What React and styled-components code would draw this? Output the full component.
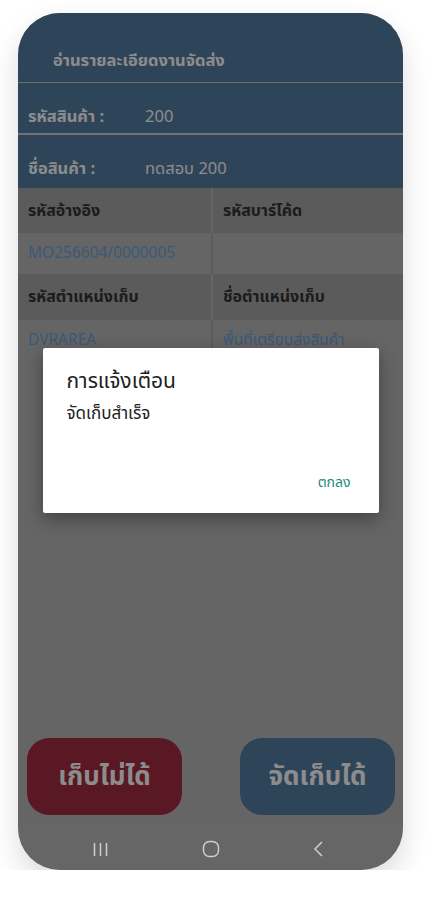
import React from "react";
import styled, { createGlobalStyle } from "styled-components";

const GlobalStyle = createGlobalStyle`
  html, body {
    margin: 0;
    padding: 0;
    background: #ffffff;
    font-family: "Noto Sans Thai", "Noto Sans", "DejaVu Sans", sans-serif;
  }
`;

const Phone = styled.div`
  position: relative;
  margin: 13px 0 0 18px;
  width: 385px;
  height: 857px;
  border-radius: 42px;
  overflow: hidden;
  box-shadow: 0 12px 28px rgba(0, 0, 0, 0.14);
  display: flex;
  flex-direction: column;
  background: #b9b9b9;
`;

const Screen = styled.div`
  position: relative;
  flex: 1;
  display: flex;
  flex-direction: column;
`;

const Header = styled.div`
  background: #547ca2;
  display: flex;
  flex-direction: column;
`;

const Title = styled.div`
  height: 70px;
  box-sizing: border-box;
  padding: 37px 0 0 35px;
  font-size: 16.5px;
  line-height: 22px;
  font-weight: 700;
  color: #ffffff;
  border-bottom: 1px solid #c8c8c8;
`;

const InfoRow = styled.div`
  display: flex;
  align-items: flex-start;
  box-sizing: border-box;
  height: ${(p) => p.h}px;
  padding: 23px 0 0 10px;
  font-size: 16.5px;
  line-height: 22px;
  color: #ffffff;
  border-bottom: ${(p) => (p.line ? "2px solid #cfcfcf" : "none")};
`;

const InfoLabel = styled.span`
  width: 117px;
  font-weight: 700;
`;

const Grid = styled.div`
  display: grid;
  grid-template-columns: 193px 1fr;
  column-gap: 2px;
`;

const HeadCell = styled.div`
  background: #a7a7a7;
  height: ${(p) => p.h}px;
  display: flex;
  align-items: center;
  padding-left: 10px;
  font-size: 16px;
  font-weight: 700;
  color: #333333;
`;

const DataCell = styled.div`
  background: #b9b9b9;
  height: ${(p) => p.h}px;
  display: flex;
  align-items: center;
  padding-left: 10px;
  font-size: 15.5px;
  color: #6aa2d8;
`;

const DataGrid = styled(Grid)`
  background: #a7a7a7;
`;

const Spacer = styled.div`
  flex: 1;
`;

const Actions = styled.div`
  display: flex;
  justify-content: space-between;
  padding: 0 8px 10px 9px;
`;

const ActionButton = styled.div`
  width: 155px;
  height: 77px;
  border-radius: 22px;
  background: ${(p) => p.bg};
  display: flex;
  align-items: center;
  justify-content: center;
  color: #ffffff;
  font-size: 26px;
  font-weight: 700;
`;

const Backdrop = styled.div`
  position: absolute;
  inset: 0;
  background: rgba(0, 0, 0, 0.45);
  display: flex;
  justify-content: center;
  align-items: flex-start;
  padding-top: 335px;
`;

const Dialog = styled.div`
  width: 336px;
  height: 165px;
  box-sizing: border-box;
  background: #ffffff;
  border-radius: 2px;
  box-shadow: 0 6px 18px rgba(0, 0, 0, 0.35);
  padding: 20px 28px 0 24px;
  display: flex;
  flex-direction: column;
`;

const DialogTitle = styled.div`
  font-size: 21px;
  line-height: 28px;
  color: #212121;
`;

const DialogText = styled.div`
  margin-top: 7px;
  font-size: 17px;
  line-height: 22px;
  color: #212121;
`;

const DialogActions = styled.div`
  margin-top: auto;
  margin-bottom: 20px;
  display: flex;
  justify-content: flex-end;
`;

const TextButton = styled.span`
  font-size: 14px;
  color: #1a8a80;
`;

const NavBar = styled.div`
  height: 45px;
  box-sizing: border-box;
  background: #666666;
  display: flex;
  align-items: center;
  justify-content: space-between;
  padding: 2px 78px 0 74px;
`;

function NavRecent() {
  return (
    <svg width="17" height="16" viewBox="0 0 17 16">
      <g stroke="#cfcfcf" strokeWidth="1.5">
        <line x1="2.5" y1="2" x2="2.5" y2="15" />
        <line x1="8.5" y1="2" x2="8.5" y2="15" />
        <line x1="14.5" y1="2" x2="14.5" y2="15" />
      </g>
    </svg>
  );
}

function NavHome() {
  return (
    <svg width="18" height="18" viewBox="0 0 18 18">
      <rect x="1.5" y="1.5" width="15" height="15" rx="6" fill="none" stroke="#cfcfcf" strokeWidth="1.5" />
    </svg>
  );
}

function NavBack() {
  return (
    <svg width="12" height="18" viewBox="0 0 12 18">
      <polyline points="9,2 2,9 9,16" fill="none" stroke="#cfcfcf" strokeWidth="1.5" />
    </svg>
  );
}

export default function App() {
  return (
    <>
      <GlobalStyle />
      <Phone>
        <Screen>
          <Header>
            <Title>อ่านรายละเอียดงานจัดส่ง</Title>
            <InfoRow h={52} line>
              <InfoLabel>รหัสสินค้า :</InfoLabel>
              <span>200</span>
            </InfoRow>
            <InfoRow h={53}>
              <InfoLabel>ชื่อสินค้า :</InfoLabel>
              <span>ทดสอบ 200</span>
            </InfoRow>
          </Header>

          <Grid>
            <HeadCell h={45}>รหัสอ้างอิง</HeadCell>
            <HeadCell h={45}>รหัสบาร์โค้ด</HeadCell>
          </Grid>
          <DataGrid>
            <DataCell h={41}>MO256604/0000005</DataCell>
            <DataCell h={41}></DataCell>
          </DataGrid>
          <Grid>
            <HeadCell h={46}>รหัสตำแหน่งเก็บ</HeadCell>
            <HeadCell h={46}>ชื่อตำแหน่งเก็บ</HeadCell>
          </Grid>
          <DataGrid>
            <DataCell h={40}>DVRAREA</DataCell>
            <DataCell h={40}>พื้นที่เตรียมส่งสินค้า</DataCell>
          </DataGrid>

          <Spacer />
          <Actions>
            <ActionButton bg="#a32c40">เก็บไม่ได้</ActionButton>
            <ActionButton bg="#547ca2">จัดเก็บได้</ActionButton>
          </Actions>

          <Backdrop>
            <Dialog>
              <DialogTitle>การแจ้งเตือน</DialogTitle>
              <DialogText>จัดเก็บสำเร็จ</DialogText>
              <DialogActions>
                <TextButton>ตกลง</TextButton>
              </DialogActions>
            </Dialog>
          </Backdrop>
        </Screen>
        <NavBar>
          <NavRecent />
          <NavHome />
          <NavBack />
        </NavBar>
      </Phone>
    </>
  );
}
